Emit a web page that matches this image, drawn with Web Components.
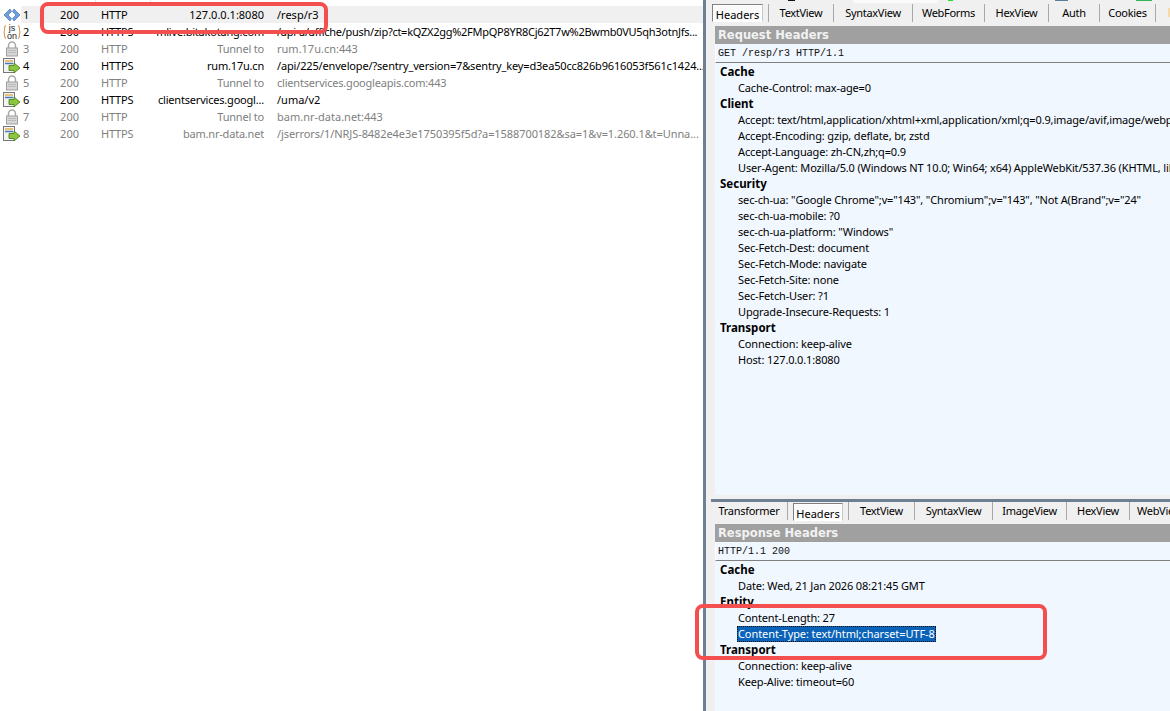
<!DOCTYPE html>
<html>
<head>
<meta charset="utf-8">
<style>
  html, body { margin: 0; height: 100%; overflow: hidden; background: #fff; }
  body { font: 11px "Noto Sans", "Open Sans", sans-serif; }
</style>
</head>
<body>
<capture-app></capture-app>

<template id="icons">
  <svg data-i="html" width="18" height="14" viewBox="0 0 18 14"><path d="M7 1 1 7l6 6 1.500-2.500L5 7l3.500-3.500zM11 1l6 6-6 6-1.500-2.500L13 7 9.500 3.500z" fill="#6f9fdc" stroke="#2f66ad" stroke-width=".6"/></svg>
  <svg data-i="json" width="18" height="16" viewBox="0 0 18 16"><path d="M3 1.500C1 1.500 2 7 .8 8 2 9 1 14.500 3 14.500M15 1.500c2 0 1 5.500 2.200 6.500C16 9 17 14.500 15 14.500" fill="none" stroke="#c87a1e"/><text x="9" y="7" font-size="9" text-anchor="middle" font-family="Liberation Sans" fill="#222">js</text><text x="9" y="15" font-size="9" text-anchor="middle" font-family="Liberation Sans" fill="#222">on</text></svg>
  <svg data-i="lock" width="14" height="16" viewBox="0 0 14 16"><path d="M3.500 7V4.500a3.500 3.500 0 0 1 7 0V7" fill="none" stroke="#a8a8a8" stroke-width="1.500"/><rect x="1.500" y="7" width="11" height="8" fill="#d6d6d6" stroke="#a0a0a0"/><path d="M3 9.500h8M3 11.500h8" stroke="#bbb"/></svg>
  <svg data-i="post" width="18" height="16" viewBox="0 0 18 16"><rect x=".5" y=".5" width="11" height="14" fill="#f4f4f4" stroke="#777"/><path d="M2 3h8" stroke="#e0b050" stroke-width="1.500"/><path d="M2 5.500h8" stroke="#4a78b8" stroke-width="1.500"/><path d="M6 7.500h5V5l6 5-6 5v-2.500H6z" fill="#8cc63f" stroke="#3f7a12" stroke-width=".8"/></svg>
</template>

<script>
const ROWS = [
  { n: 1, icon: 'html', host: '127.0.0.1:8080', url: '/resp/r3', proto: 'HTTP', on: true },
  { n: 2, icon: 'json', host: 'mlive.bitakotang.com', url: '/api-a/affiche/push/zip?ct=kQZX2gg%2FMpQP8YR8Cj62T7w%2Bwmb0VU5qh3otnJfs...', proto: 'HTTPS', ls: -0.27 },
  { n: 3, icon: 'lock', host: 'Tunnel to', url: 'rum.17u.cn:443', proto: 'HTTP', dim: true },
  { n: 4, icon: 'post', host: 'rum.17u.cn', url: '/api/225/envelope/?sentry_version=7&sentry_key=d3ea50cc826b9616053f561c1424...', proto: 'HTTPS', ls: -0.16 },
  { n: 5, icon: 'lock', host: 'Tunnel to', url: 'clientservices.googleapis.com:443', proto: 'HTTP', dim: true, ls: -0.2 },
  { n: 6, icon: 'post', host: 'clientservices.googl...', url: '/uma/v2', proto: 'HTTPS' },
  { n: 7, icon: 'lock', host: 'Tunnel to', url: 'bam.nr-data.net:443', proto: 'HTTP', dim: true },
  { n: 8, icon: 'post', host: 'bam.nr-data.net', url: '/jserrors/1/NRJS-8482e4e3e1750395f5d?a=1588700182&sa=1&v=1.260.1&t=Unna...', proto: 'HTTPS', dim: true, ls: -0.08 },
];

const REQUEST = [
  ['Cache', ['Cache-Control: max-age=0']],
  ['Client', [
    'Accept: text/html,application/xhtml+xml,application/xml;q=0.9,image/avif,image/webp,image/apng',
    'Accept-Encoding: gzip, deflate, br, zstd',
    'Accept-Language: zh-CN,zh;q=0.9',
    'User-Agent: Mozilla/5.0 (Windows NT 10.0; Win64; x64) AppleWebKit/537.36 (KHTML, like Gecko)',
  ]],
  ['Security', [
    'sec-ch-ua: "Google Chrome";v="143", "Chromium";v="143", "Not A(Brand";v="24"',
    'sec-ch-ua-mobile: ?0',
    'sec-ch-ua-platform: "Windows"',
    'Sec-Fetch-Dest: document',
    'Sec-Fetch-Mode: navigate',
    'Sec-Fetch-Site: none',
    'Sec-Fetch-User: ?1',
    'Upgrade-Insecure-Requests: 1',
  ]],
  ['Transport', ['Connection: keep-alive', 'Host: 127.0.0.1:8080']],
];

const RESPONSE = [
  ['Cache', ['Date: Wed, 21 Jan 2026 08:21:45 GMT']],
  ['Entity', ['Content-Length: 27', '*Content-Type: text/html;charset=UTF-8']],
  ['Transport', ['Connection: keep-alive', 'Keep-Alive: timeout=60']],
];

class SessionRow extends HTMLElement {
  connectedCallback() {
    const r = this.data;
    this.attachShadow({ mode: 'open' });
    const icon = document.getElementById('icons').content.querySelector(`[data-i="${r.icon}"]`).outerHTML;
    this.shadowRoot.innerHTML = `
      <style>
        :host { display: grid; grid-template-columns: 21px 25px 33px 71px 114px minmax(0, 1fr); height: 17px; line-height: 17px; white-space: nowrap; color: ${r.dim ? '#808080' : '#000'}; }
        .ic { display: flex; align-items: center; justify-content: center; padding-left: 2px; }
        .sel { grid-column: 2 / -1; display: grid; grid-template-columns: subgrid; background: ${r.on ? '#f0f0f0' : 'transparent'}; }
        .n { padding-left: 2px; }
        .code { text-align: right; }
        .proto { padding-left: 22px; letter-spacing: -0.2px; }
        .host { text-align: right; overflow: hidden; letter-spacing: ${r.on ? 0 : -0.2}px; }
        .url { padding-left: 13px; overflow: hidden; letter-spacing: ${r.ls || 0}px; }
      </style>
      <span class="ic">${icon}</span>
      <div class="sel">
        <span class="n">${r.n}</span><span class="code">200</span><span class="proto">${r.proto}</span>
        <span class="host">${r.host}</span><span class="url">${r.url.replace(/&/g, '&amp;')}</span>
      </div>`;
  }
}
customElements.define('session-row', SessionRow);

class SessionList extends HTMLElement {
  connectedCallback() {
    this.attachShadow({ mode: 'open' });
    this.shadowRoot.innerHTML = `
      <style>
        :host { display: block; width: 703px; flex: none; background: #fff; overflow: hidden; }
        .head { height: 6px; display: flex; }
        .head i { border-right: 1px solid #e5e5e5; }
      </style>
      <div class="head"><i style="width:95px"></i><i style="width:54px"></i></div>
      <slot></slot>`;
    for (const r of ROWS) {
      const el = document.createElement('session-row');
      el.data = r;
      this.appendChild(el);
    }
  }
}
customElements.define('session-list', SessionList);

class TabStrip extends HTMLElement {
  connectedCallback() {
    const tabs = this.getAttribute('tabs').split(',');
    const active = this.getAttribute('active');
    const widths = this.getAttribute('widths').split(',');
    this.attachShadow({ mode: 'open' });
    this.shadowRoot.innerHTML = `
      <style>
        :host { display: flex; height: 22px; flex: none; background: #f0f0f0; white-space: nowrap; overflow: hidden; letter-spacing: -0.3px; }
        span { flex: none; box-sizing: border-box; text-align: center; border-right: 1px solid #a8a8a8; height: 18px; line-height: 18px; }
        span:first-child:not(.on) { padding-right: 7px; letter-spacing: -0.5px; }
        span.on { background: #fafafa; border: 1px solid #808080; border-right-color: #c8c8c8; border-bottom-color: #fff; margin: var(--act-top, 1px) 5px 0 var(--act-left, 5px); height: 18px; line-height: 17px; padding-top: 1px; box-shadow: inset 0 0 0 1px #fff; letter-spacing: 0; }
        span.on + span { border-left: 1px solid #a8a8a8; }
      </style>
      ${tabs.map((t, i) => `<span class="${t === active ? 'on' : ''}" style="width:${widths[i]}px">${t}</span>`).join('')}
      <slot></slot>`;
  }
}
customElements.define('tab-strip', TabStrip);

// sliver of the tab row above, mostly scrolled out of the crop
class ClippedStrip extends HTMLElement {
  connectedCallback() {
    this.attachShadow({ mode: 'open' });
    this.shadowRoot.innerHTML = `
      <style>
        :host { display: flex; height: 4px; flex: none; background: #f0f0f0; overflow: hidden; }
        i { display: block; flex: none; height: 1px; }
      </style>
      <i style="width:7px;margin-left:77px;background:#111"></i>
      <i style="width:85px;height:3px;margin-left:58px;background:#fafafa"></i>
      <i style="width:5px;margin-left:10px;background:#22dd22"></i>
      <i style="width:13px;margin-left:102px;background:#5b7d9c"></i>
      <i style="width:16px;margin-left:68px;background:#2fb457"></i>`;
  }
}
customElements.define('clipped-strip', ClippedStrip);

class HeaderView extends HTMLElement {
  connectedCallback() {
    const groups = this.getAttribute('kind') === 'response' ? RESPONSE : REQUEST;
    this.attachShadow({ mode: 'open' });
    const body = groups.map(([name, lines]) => `
      <div class="g">${name}</div>
      ${lines.map(l => l[0] === '*'
        ? `<div class="l"><span class="hit">${l.slice(1)}</span></div>`
        : `<div class="l">${l}</div>`).join('')}`).join('');
    this.shadowRoot.innerHTML = `
      <style>
        :host { display: flex; flex-direction: column; flex: 1; min-height: 0; margin-left: 4px; background: #f0f7ff; overflow: hidden; white-space: nowrap; }
        .title { flex: none; height: 18px; padding-left: 3px; background: #a0a0a0; color: #f2f2f2; font: 700 11.500px/19px "DejaVu Sans", sans-serif; }
        .first { flex: none; height: 18px; padding-left: 2px; background: #f0f7ff; border-left: 1px solid #fff; border-bottom: 1px solid #808080; font: 10px/19px "Liberation Mono", monospace; color: #111; }
        .body { padding: 1px 0 0 5px; line-height: 16px; }
        .g { font-weight: 700; font-size: 11.500px; color: #000; }
        .l { padding-left: 18px; color: #000; letter-spacing: -0.15px; }
        .hit { display: inline-block; margin-left: -1px; padding: 0 1px; line-height: 16px; background: #0a63b8; color: #fff; outline: 1px dotted #111; outline-offset: -1px; letter-spacing: -0.08px; }
      </style>
      <div class="title">${this.getAttribute('title')}</div>
      <div class="first">${this.getAttribute('first')}</div>
      <div class="body">${body}</div>`;
  }
}
customElements.define('header-view', HeaderView);

class CallOut extends HTMLElement {
  connectedCallback() {
    this.attachShadow({ mode: 'open' });
    this.shadowRoot.innerHTML = `
      <style>
        :host { position: absolute; box-sizing: border-box; border: 4px solid #f44f4f; border-radius: 8px; pointer-events: none; }
      </style>`;
  }
}
customElements.define('call-out', CallOut);

class CaptureApp extends HTMLElement {
  connectedCallback() {
    this.attachShadow({ mode: 'open' });
    this.shadowRoot.innerHTML = `
      <style>
        :host { display: flex; position: relative; width: 1170px; height: 711px; overflow: hidden; }
        .split { flex: none; width: 3px; background: #6f7f92; }
        .inspect { flex: 1; min-width: 0; display: flex; flex-direction: column; background: #f0f0f0; padding-left: 5px; }
        .pane { display: flex; flex-direction: column; min-height: 0; }
        .req { flex: none; height: 499px; padding-bottom: 4px; box-sizing: border-box; }
        .req tab-strip { --act-top: 0px; --act-left: 1px; }
        .res { flex: 1; border-top: 3px solid #6f7f92; }
        .peek { flex: none; width: 2px; height: 9px; margin: 4px 0 0 12px; background: #f5d9a8; }
      </style>
      <session-list></session-list>
      <div class="split"></div>
      <div class="inspect">
        <div class="pane req">
          <clipped-strip></clipped-strip>
          <tab-strip tabs="Headers,TextView,SyntaxView,WebForms,HexView,Auth,Cookies" active="Headers" widths="51,66,79,72,64,51,56"><div class="peek"></div></tab-strip>
          <header-view kind="request" title="Request Headers" first="GET /resp/r3 HTTP/1.1"></header-view>
        </div>
        <div class="pane res">
          <tab-strip tabs="Transformer,Headers,TextView,SyntaxView,ImageView,HexView,WebView" active="Headers" widths="77,50,67,78,74,63,60"></tab-strip>
          <header-view kind="response" title="Response Headers" first="HTTP/1.1 200"></header-view>
        </div>
      </div>
      <call-out style="left:40px;top:2px;width:288px;height:32px"></call-out>
      <call-out style="left:695px;top:604px;width:352px;height:56px"></call-out>`;
  }
}
customElements.define('capture-app', CaptureApp);
</script>
</body>
</html>
